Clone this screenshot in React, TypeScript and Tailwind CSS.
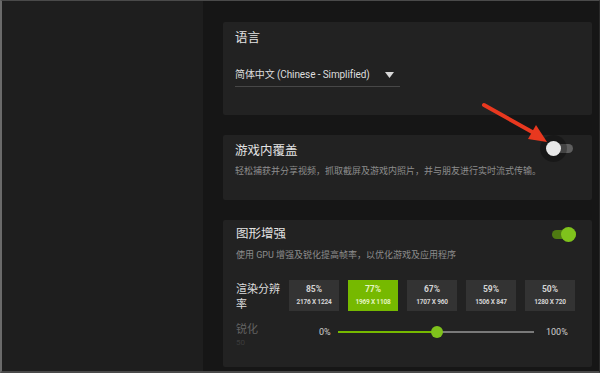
import React from "react";

const resolutions = [
  { pct: "85%", res: "2176 X 1224" },
  { pct: "77%", res: "1969 X 1108", active: true },
  { pct: "67%", res: "1707 X 960" },
  { pct: "59%", res: "1506 X 847" },
  { pct: "50%", res: "1280 X 720" },
];

function Toggle({ on }: { on?: boolean }) {
  if (on) {
    return (
      <div className="relative h-[9px] w-[24px] rounded-full bg-[#4f7a12]">
        <div className="absolute -top-[3px] right-0 h-[15px] w-[15px] rounded-full bg-[#7fc21c]" />
      </div>
    );
  }
  return (
    <div className="relative h-[9px] w-[22px] rounded-full bg-[#5e5e5e]">
      <div className="absolute -left-[5px] -top-[3px] h-[15px] w-[15px] rounded-full bg-[#e9e9e9] shadow-[0_0_0_6px_rgba(0,0,0,0.28)]" />
    </div>
  );
}

export default function App() {
  return (
    <div className="relative h-[373px] w-[600px] overflow-hidden font-['Roboto','Noto_Sans_CJK_SC',sans-serif]">
      <div className="flex h-full w-full border-b-2 border-l-2 border-r border-t border-b-[#4a4a4a] border-l-[#6a6a6a] border-r-[#2a2a2a] border-t-[#4a4a4a] bg-[#161616]">
        <aside className="w-[201px] shrink-0 bg-[#1e1e1e]" />
        <main className="flex flex-1 flex-col gap-[20px] pl-[20px] pr-[7px] pt-[21px]">
          {/* 语言 */}
          <section className="h-[93px] rounded-[2px] bg-[#222222] pl-[12px] pt-[8px]">
            <h3 className="text-[12.5px] leading-[16px] text-[#e2e2e2]">语言</h3>
            <div className="mt-[21px] flex w-[165px] items-center justify-between border-b border-[#474747] pb-[3px]">
              <span className="text-[10px] leading-[16px] tracking-[-0.1px] text-[#dedede]">
                简体中文 (Chinese - Simplified)
              </span>
              <svg width="9" height="6" viewBox="0 0 9 6" className="mr-[6px]">
                <path d="M0 0 H9 L4.5 6 Z" fill="#d8d8d8" />
              </svg>
            </div>
          </section>

          {/* 游戏内覆盖 */}
          <section className="h-[65px] rounded-[2px] bg-[#222222] pl-[12px] pr-[19px] pt-[8px]">
            <div className="flex items-center justify-between">
              <h3 className="text-[12.5px] leading-[16px] text-[#e2e2e2]">游戏内覆盖</h3>
              <div className="-mt-[6px]">
                <Toggle />
              </div>
            </div>
            <p className="mt-[6px] text-[9px] leading-[12px] text-[#8d8d8d]">
              轻松捕获并分享视频，抓取截屏及游戏内照片，并与朋友进行实时流式传输。
            </p>
          </section>

          {/* 图形增强 */}
          <section className="h-[147px] rounded-[2px] bg-[#222222] pl-[13px] pr-[16px] pt-[6px]">
            <div className="flex items-center justify-between">
              <h3 className="text-[12.5px] leading-[16px] text-[#e2e2e2]">图形增强</h3>
              <Toggle on />
            </div>
            <p className="mt-[7px] text-[9px] leading-[12px] text-[#8d8d8d]">
              使用 GPU 增强及锐化提高帧率，以优化游戏及应用程序
            </p>
            <div className="mt-[17px] flex items-center">
              <div className="w-[53px] pt-[4px] text-[11px] leading-[15px] text-[#dcdcdc]">
                <div className="w-[48px]">渲染分辨率</div>
              </div>
              <div className="flex gap-[9px]">
                {resolutions.map((r) => (
                  <div
                    key={r.pct}
                    className={
                      r.active
                        ? "flex h-[31px] w-[50px] flex-col items-center justify-center gap-[6px] bg-[#76b900] text-[#e4f5c2]"
                        : "flex h-[31px] w-[50px] flex-col items-center justify-center gap-[6px] bg-[#333333] text-[#d4d4d4]"
                    }
                  >
                    <span className="text-[8.5px] font-bold leading-[8px]">{r.pct}</span>
                    <span className="text-[6.5px] font-bold leading-[7px] tracking-[-0.2px]">{r.res}</span>
                  </div>
                ))}
              </div>
            </div>
            <div className="mt-[10px] flex items-start">
              <div className="w-[83px]">
                <div className="text-[11px] leading-[15px] text-[#626262]">锐化</div>
                <div className="text-[8px] leading-[11px] text-[#3c3c3c]">50</div>
              </div>
              <div className="mt-[4px] flex items-center">
                <span className="w-[16px] text-[9px] leading-[12px] text-[#cfcfcf]">0%</span>
                <div className="relative ml-[3px] h-[2px] w-[196px] bg-[#7a7a7a]">
                  <div className="absolute left-0 top-0 h-[2px] w-[99px] bg-[#76b900]" />
                  <div className="absolute left-[93px] -top-[5px] h-[12px] w-[12px] rounded-full bg-[#7fc21c]" />
                </div>
                <span className="ml-[12px] text-[9px] leading-[12px] text-[#cfcfcf]">100%</span>
              </div>
            </div>
          </section>
        </main>
      </div>

      {/* red pointer arrow */}
      <svg
        className="pointer-events-none absolute inset-0"
        width="600"
        height="373"
        viewBox="0 0 600 373"
      >
        <line x1="484" y1="105" x2="534" y2="133" stroke="#e8381f" strokeWidth="4" strokeLinecap="round" />
        <path d="M547 142 L528 139 L536 125 Z" fill="#e8381f" />
      </svg>
    </div>
  );
}
